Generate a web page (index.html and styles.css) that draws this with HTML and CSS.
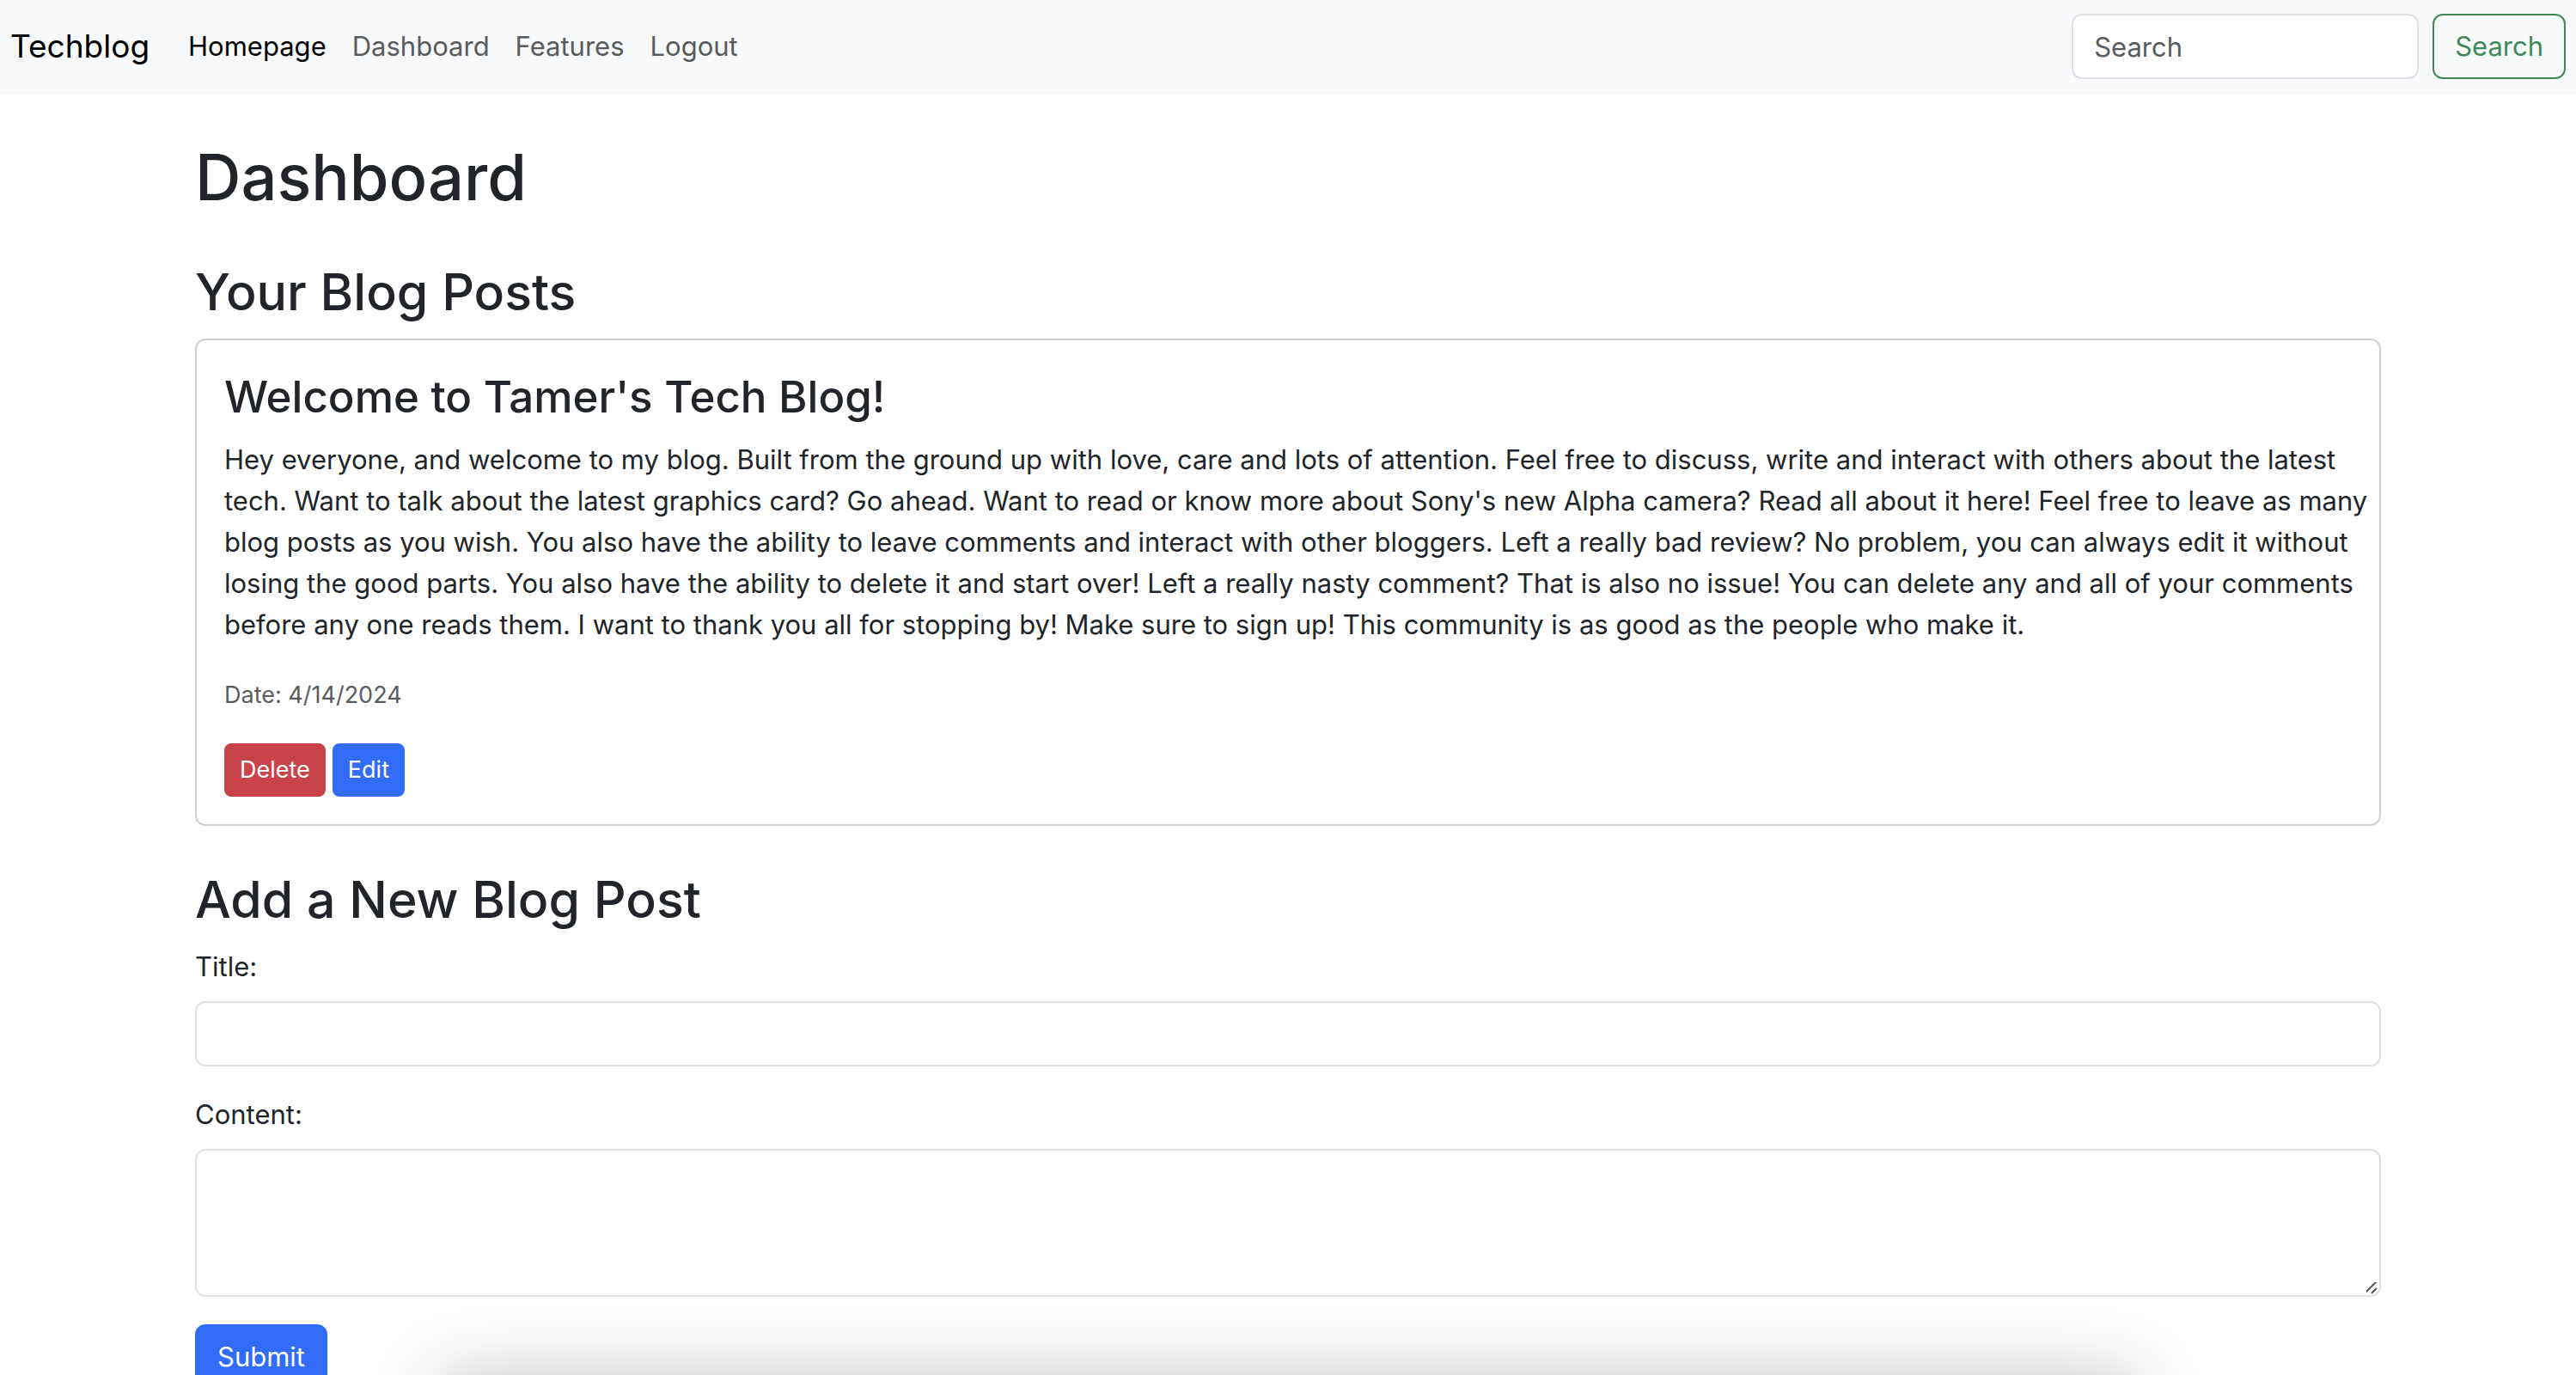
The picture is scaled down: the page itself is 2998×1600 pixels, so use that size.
FILE: index.html
```html
<!DOCTYPE html>
<html lang="en">
<head>
<meta charset="utf-8">
<meta name="viewport" content="width=device-width, initial-scale=1">
<title>Techblog</title>
<link rel="stylesheet" href="styles.css">
</head>
<body>
<nav class="navbar">
  <a class="brand" href="#">Techblog</a>
  <div class="links">
    <a class="link active" href="#">Homepage</a>
    <a class="link" href="#">Dashboard</a>
    <a class="link" href="#">Features</a>
    <a class="link" href="#">Logout</a>
  </div>
  <form class="search">
    <input class="control search-input" type="search" placeholder="Search" aria-label="Search">
    <button class="btn btn-outline" type="button">Search</button>
  </form>
</nav>
<main class="container">
  <h1 class="page-title">Dashboard</h1>
  <section class="posts">
    <h2 class="section-title">Your Blog Posts</h2>
    <article class="card">
      <h3 class="card-title">Welcome to Tamer's Tech Blog!</h3>
      <p class="card-text">Hey everyone, and welcome to my blog. Built from the ground up with love, care and lots of attention. Feel free to discuss, write and interact with others about the latest tech. Want to talk about the latest graphics card? Go ahead. Want to read or know more about Sony's new Alpha camera? Read all about it here! Feel free to leave as many blog posts as you wish. You also have the ability to leave comments and interact with other bloggers. Left a really bad review? No problem, you can always edit it without losing the good parts. You also have the ability to delete it and start over! Left a really nasty comment? That is also no issue! You can delete any and all of your comments before any one reads them. I want to thank you all for stopping by! Make sure to sign up! This community is as good as the people who make it.</p>
      <p class="date"><small class="small">Date: 4/14/2024</small></p>
      <div class="actions">
        <button class="btn btn-small btn-danger" type="button">Delete</button>
        <button class="btn btn-small btn-primary" type="button">Edit</button>
      </div>
    </article>
  </section>
  <section class="new-post">
    <h2 class="section-title">Add a New Blog Post</h2>
    <form>
      <div class="field">
        <label class="label" for="title">Title:</label>
        <input class="control" id="title" type="text">
      </div>
      <div class="field">
        <label class="label" for="content">Content:</label>
        <textarea class="control area" id="content"></textarea>
      </div>
      <button class="btn btn-primary" type="button">Submit</button>
    </form>
  </section>
</main>
<div class="shade" aria-hidden="true"></div>
</body>
</html>
```
FILE: styles.css
```css
* { box-sizing: border-box; }
html { height: 100%; }
body {
  margin: 0;
  height: 100%;
  overflow: hidden;
  background: #fff;
  color: #212529;
  font: 400 31px/48px Inter, "Liberation Sans", sans-serif;
}
h1, h2, h3, p { margin: 0; font-weight: 500; }
.navbar {
  display: flex;
  align-items: center;
  padding: 16px 12px 18px;
  background: #f8f9fb;
}
.brand { margin-right: 30px; color: #000; font-size: 37px; line-height: 60px; text-decoration: none; }
.links { display: flex; flex: 1; }
.link { padding: 0 15px; color: #595b5d; text-decoration: none; }
.link.active { color: #000; }
.search { display: flex; gap: 16px; }
.control {
  display: block;
  width: 100%;
  height: 76px;
  padding: 12px 24px;
  border: 2px solid #dee2e6;
  border-radius: 12px;
  background: #fff;
  color: #212529;
  font: inherit;
}
.control::placeholder { color: #595c5f; opacity: 1; }
.search-input { width: 404px; }
.btn {
  padding: 12px 24px;
  border: 2px solid transparent;
  border-radius: 12px;
  color: #fff;
  font: inherit;
}
.btn-outline { border-color: #408859; background: transparent; color: #408859; }
.btn-primary { border-color: #306cf6; background: #306cf6; }
.btn-danger { border-color: #c9444a; background: #c9444a; }
.btn-small { padding: 8px 16px; border-radius: 8px; font-size: 27px; line-height: 42px; }
.container { margin: 0 auto; padding: 48px 24px; max-width: 2592px; }
.page-title { margin-bottom: 48px; font-size: 74px; line-height: 96px; }
.section-title { margin-bottom: 16px; font-size: 59px; line-height: 76px; }
.card { margin-bottom: 48px; padding: 32px 8px 32px 32px; border: 2px solid #d0d1d1; border-radius: 12px; }
.card-title { margin-bottom: 16px; font-size: 51px; line-height: 67px; }
.card-text { margin-bottom: 32px; font-weight: 400; }
.date { margin-bottom: 32px; color: #595c5f; font-weight: 400; }
.small { font-size: 27px; }
.actions { display: flex; gap: 8px; }
.field { margin-bottom: 32px; }
.label { display: block; margin-bottom: 16px; }
.area { height: 172px; resize: vertical; }
.area::-webkit-resizer {
  background: url("data:image/svg+xml,%3Csvg xmlns='http://www.w3.org/2000/svg' width='18' height='18'%3E%3Cpath d='M1 16L15 2M9 16L15 10' stroke='%23555' stroke-width='2' fill='none'/%3E%3C/svg%3E") no-repeat right bottom;
}
.shade {
  position: fixed;
  top: 100%;
  left: 17%;
  right: 17%;
  height: 200px;
  box-shadow: 0 0 80px rgba(0, 0, 0, .23);
}
```
